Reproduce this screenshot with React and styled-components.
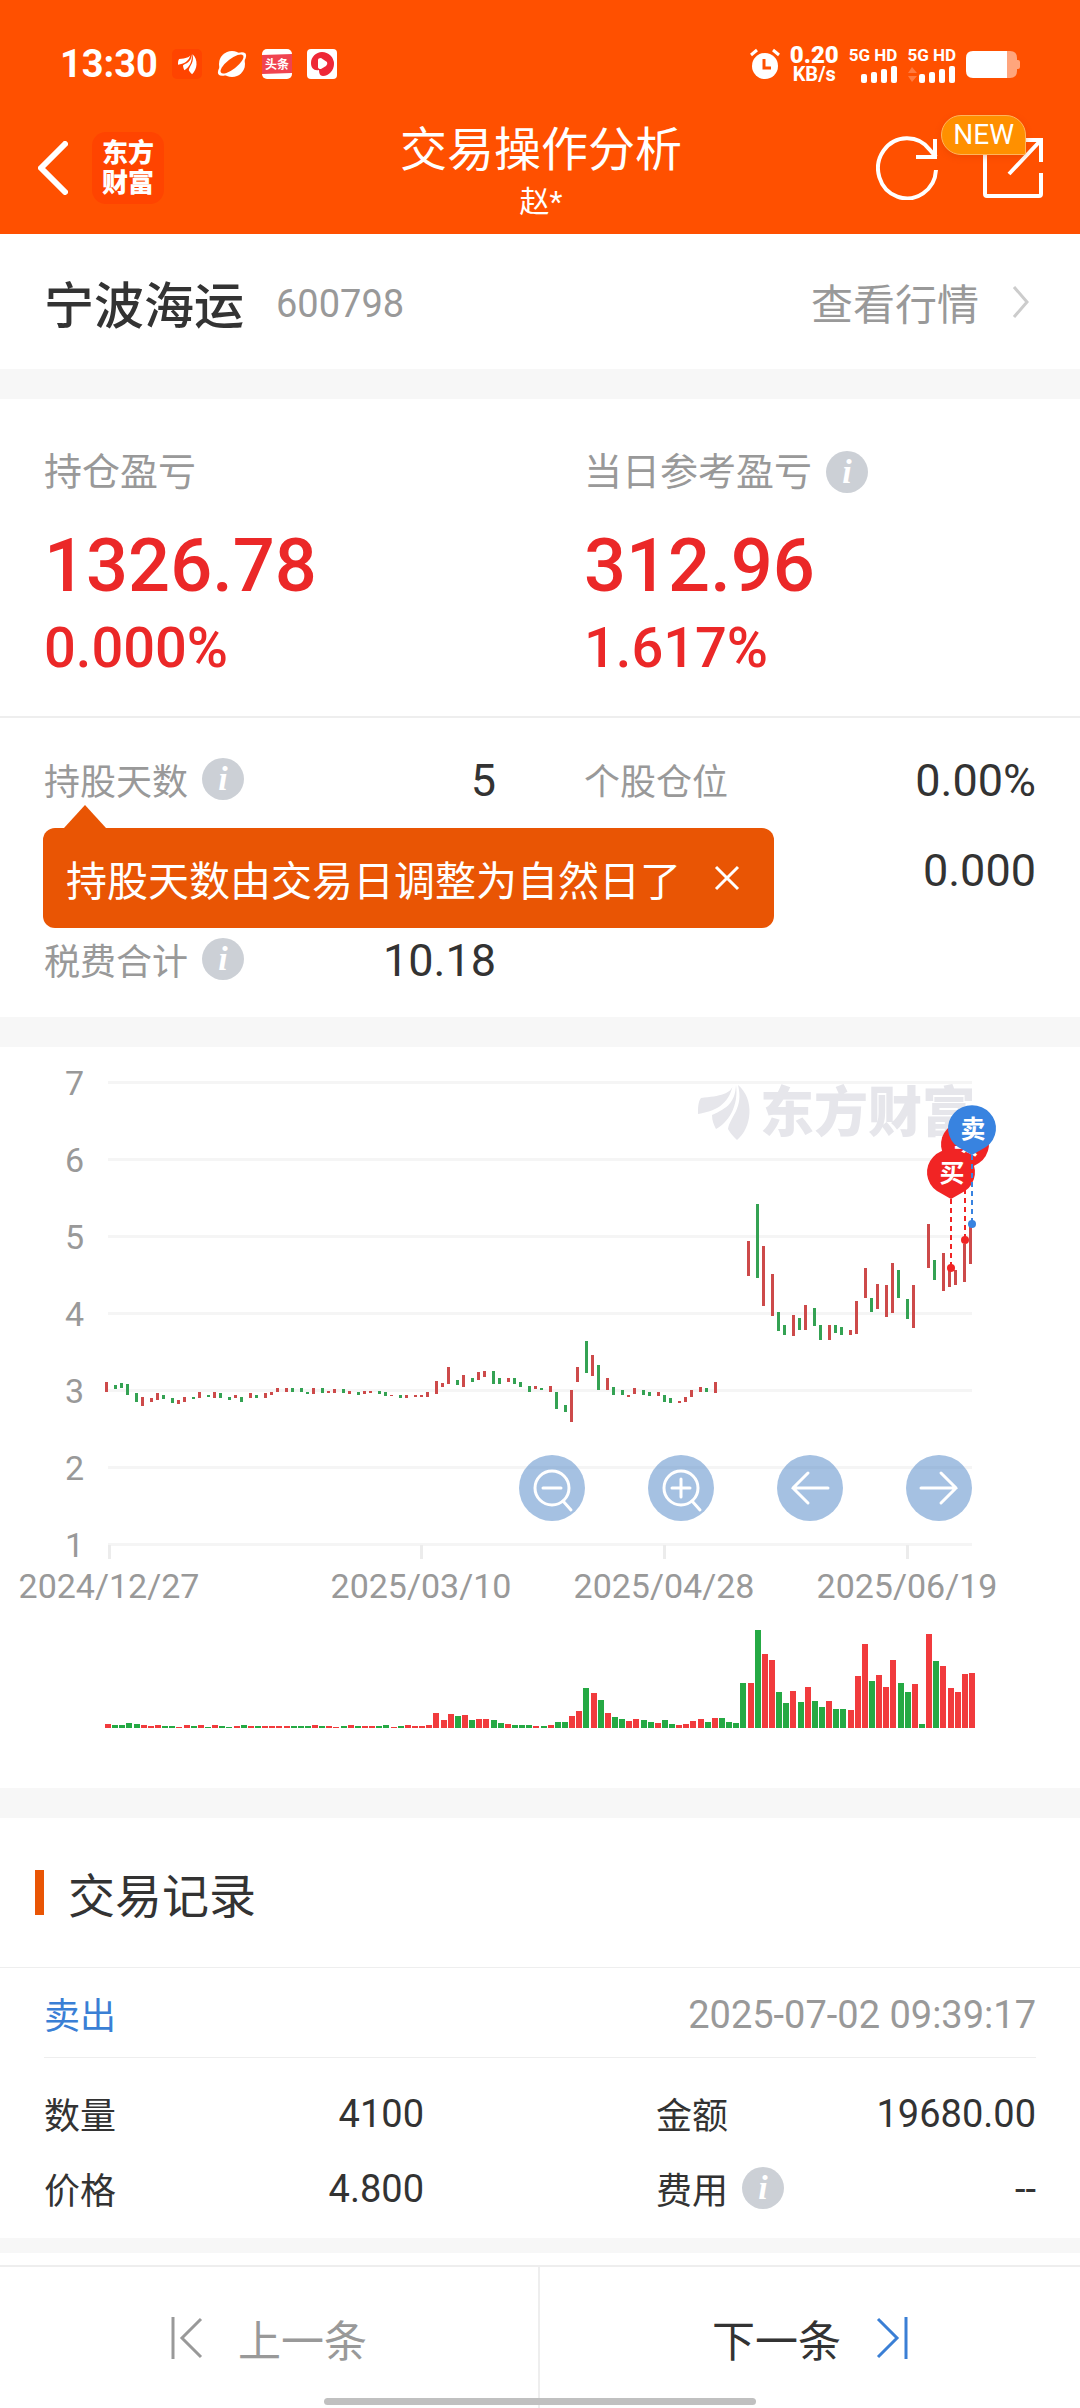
import { useState } from 'react'
import styled, { createGlobalStyle } from 'styled-components'

const days = [
    [1, 3.10, 2.98, 4], [0, 3.07, 3.01, 3], [0, 3.09, 3.03, 3], [0, 3.08, 2.93, 5],
    [0, 2.96, 2.85, 4], [1, 2.91, 2.79, 3], [1, 2.90, 2.85, 2], [1, 2.96, 2.87, 3],
    [0, 2.93, 2.88, 2], [0, 2.89, 2.83, 2], [1, 2.87, 2.82, 1], [1, 2.91, 2.85, 3],
    [0, 2.91, 2.88, 2], [1, 2.97, 2.90, 3], [0, 2.94, 2.91, 1], [1, 2.97, 2.90, 3],
    [0, 2.96, 2.89, 2], [0, 2.91, 2.87, 1], [1, 2.94, 2.89, 2], [0, 2.91, 2.85, 3],
    [1, 2.96, 2.90, 2], [0, 2.93, 2.90, 2], [1, 2.96, 2.90, 2], [1, 2.98, 2.94, 2],
    [1, 3.02, 2.98, 2], [1, 3.02, 2.98, 2], [0, 3.02, 2.97, 2], [0, 3.02, 2.97, 2],
    [0, 2.98, 2.95, 2], [1, 3.02, 2.95, 3], [0, 3.03, 2.96, 2], [1, 2.99, 2.96, 2],
    [1, 3.01, 2.96, 1], [0, 3.01, 2.96, 2], [1, 2.99, 2.95, 3], [0, 2.98, 2.93, 2],
    [1, 2.99, 2.95, 2], [1, 2.99, 2.96, 2], [0, 2.99, 2.95, 2], [0, 2.98, 2.92, 3],
    [1, 2.94, 2.92, 1], [0, 2.94, 2.89, 2], [1, 2.93, 2.90, 3], [1, 2.94, 2.91, 2],
    [1, 2.94, 2.91, 2], [1, 2.97, 2.91, 3], [1, 3.12, 2.95, 15], [1, 3.09, 3.04, 8],
    [1, 3.30, 3.08, 14], [0, 3.13, 3.06, 12], [1, 3.19, 3.04, 13], [0, 3.16, 3.11, 8],
    [1, 3.23, 3.13, 9], [1, 3.25, 3.17, 9], [0, 3.25, 3.08, 8], [0, 3.16, 3.08, 5],
    [1, 3.16, 3.10, 4], [0, 3.15, 3.08, 3], [0, 3.10, 3.04, 3], [0, 3.05, 2.98, 3],
    [1, 3.05, 3.01, 2], [0, 3.03, 3.00, 2], [1, 3.05, 2.97, 3], [0, 2.98, 2.75, 6],
    [0, 2.81, 2.71, 6], [1, 3.00, 2.59, 12], [1, 3.30, 3.10, 17], [0, 3.63, 3.22, 40],
    [1, 3.46, 3.18, 35], [0, 3.32, 3.00, 28], [1, 3.15, 3.00, 15], [0, 3.04, 2.93, 11],
    [0, 3.00, 2.93, 9], [1, 2.94, 2.91, 7], [1, 3.02, 2.95, 9], [0, 3.00, 2.94, 8],
    [0, 2.98, 2.92, 6], [1, 2.98, 2.92, 5], [0, 2.94, 2.84, 8], [0, 2.89, 2.83, 4],
    [1, 2.86, 2.83, 3], [1, 2.91, 2.84, 4], [1, 3.00, 2.91, 7], [1, 3.04, 2.97, 9],
    [0, 3.03, 2.97, 6], [1, 3.11, 2.96, 10], [0, null, null, 10], [0, null, null, 6],
    [0, null, null, 5], [0, null, null, 45], [1, 4.93, 4.48, 45], [0, 5.42, 4.45, 98],
    [1, 4.87, 4.09, 74], [1, 4.51, 3.96, 68], [0, 4.01, 3.77, 36], [0, 3.84, 3.72, 25],
    [1, 3.97, 3.70, 37], [0, 3.93, 3.78, 26], [1, 4.10, 3.78, 41], [0, 4.06, 3.83, 27],
    [0, 3.84, 3.65, 21], [1, 3.85, 3.65, 27], [0, 3.84, 3.74, 19], [0, 3.82, 3.72, 19],
    [1, 3.78, 3.71, 18], [1, 4.16, 3.73, 52], [1, 4.58, 4.19, 84], [0, 4.19, 4.01, 47],
    [1, 4.38, 4.05, 53], [1, 4.36, 3.95, 41], [1, 4.65, 4.00, 68], [0, 4.56, 4.20, 45],
    [0, 4.18, 3.92, 36], [1, 4.36, 3.81, 44], [0, null, null, 4], [1, 5.16, 4.58, 94],
    [0, 4.69, 4.43, 67], [1, 4.78, 4.28, 62], [1, 4.54, 4.34, 40], [1, 4.56, 4.37, 36],
    [1, 4.90, 4.40, 54], [1, 5.12, 4.64, 55],
]

const dateTicks = [
    { x: 109, label: '2024/12/27' },
    { x: 421, label: '2025/03/10' },
    { x: 664, label: '2025/04/28' },
    { x: 907, label: '2025/06/19' },
]

const trades = [
    { x: 965, y: 98, dot: 193, type: '买' },
    { x: 951, y: 126, dot: 221, type: '买' },
    { x: 972, y: 82, dot: 177, type: '卖' },
]

const priceY = (price) => 35 + (7 - price) * 77
const candleX = (i) => 105 + 3 * Math.ceil(i * 2.38 - 0.25)

const Feather = () => (
    <>
        <path d='M35 0 C34 10 22 12 3 14 C0 18 0 24 0 30 C16 27 31 22 35 0Z' />
        <path d='M38 1 C37 18 30 24 14 31 C14 37 16 41 18 45 C30 39 41 22 38 1Z' />
        <path d='M40 1 C57 15 54 44 39 56 C35 52 32 49 30 45 C32 33 46 24 40 1Z' />
    </>
)

const StatusBar = () => (
    <Status>
        <Clock>13:30</Clock>
        <StatusIcons>
            <svg width='30' height='30' viewBox='0 0 30 30'>
                <rect width='30' height='30' rx='5' fill='#ff4400' />
                <g fill='#fff' transform='translate(6 5) scale(.36)'><Feather /></g>
            </svg>
            <svg width='30' height='30' viewBox='0 0 30 30'>
                <circle cx='15' cy='15' r='13' fill='#fff' />
                <ellipse cx='15' cy='15' rx='17' ry='7' fill='#fff' transform='rotate(-38 15 15)' />
                <ellipse cx='15' cy='15' rx='14' ry='5' fill='#ff5000' transform='rotate(-38 15 15)' />
            </svg>
            <svg width='30' height='30' viewBox='0 0 30 30'>
                <rect width='30' height='30' rx='5' fill='#fff' />
                <path d='M0 6 L30 5 V24 L0 25Z' fill='#f04350' />
                <text x='15' y='20' fontSize='12' fontWeight='700' textAnchor='middle' fill='#fff'>头条</text>
            </svg>
            <svg width='30' height='30' viewBox='0 0 30 30'>
                <rect width='30' height='30' rx='4' fill='#fff' />
                <path d='M15 3 A12 12 0 0 1 27 15 C27 21 22 27 16 27 C13 27 12 24 12 21 C7 22 4 19 4 14 C4 8 9 3 15 3Z' fill='#ee2737' />
                <path d='M11 11 Q11 9 14 9 L20 13 Q21 15 19 17 L14 20 Q11 20 11 18Z' fill='#fff' />
            </svg>
        </StatusIcons>
        <StatusRight>
            <svg width='30' height='32' viewBox='0 0 30 32'>
                <circle cx='15' cy='18' r='13' fill='#fff' />
                <path d='M1 7 L7 2 M23 2 L29 7' stroke='#fff' strokeWidth='3' />
                <path d='M14 11 V20 H21' fill='none' stroke='#ff5000' strokeWidth='3' />
            </svg>
            <Speed>
                <strong>0.20</strong>
                <span>KB/s</span>
            </Speed>
            <Signal>
                <span>5G HD</span>
                <svg width='48' height='17' viewBox='0 0 48 17' fill='#fff'>
                    <rect x='12' y='8' width='6' height='9' rx='2' />
                    <rect x='22' y='6' width='6' height='11' rx='2' />
                    <rect x='32' y='3' width='6' height='14' rx='2' />
                    <rect x='42' y='0' width='6' height='17' rx='2' />
                </svg>
            </Signal>
            <Signal>
                <span>5G HD</span>
                <svg width='48' height='17' viewBox='0 0 48 17' fill='#fff'>
                    <path d='M1 7 L5 1 L10 7Z M1 10 L5 16 L10 10Z' opacity='.25' />
                    <rect x='12' y='8' width='6' height='9' rx='2' />
                    <rect x='22' y='6' width='6' height='11' rx='2' />
                    <rect x='32' y='3' width='6' height='14' rx='2' />
                    <rect x='42' y='0' width='6' height='17' rx='2' />
                </svg>
            </Signal>
            <svg width='54' height='27' viewBox='0 0 54 27'>
                <path d='M40 0 H44 Q51 0 51 7 V9 H52 Q54 9 54 11 V16 Q54 18 52 18 H51 V20 Q51 27 44 27 H40Z' fill='#ffa57c' />
                <path d='M7 0 H41 V27 H7 Q0 27 0 20 V7 Q0 0 7 0Z' fill='#fff' />
            </svg>
        </StatusRight>
    </Status>
)

const Info = ({ label }) => <InfoButton type='button' aria-label={label}>i</InfoButton>

const Pin = ({ x, y, dot, type }) => {
    const color = type === '卖' ? '#3883e0' : '#f12424'
    return (
        <g>
            <line x1={x} y1={y + 26} x2={x} y2={dot} stroke={color} strokeWidth='2' strokeDasharray='5 4' />
            <circle cx={x} cy={dot} r='4' fill={color} />
            <path
                d={`M${x} ${y + 26} L${x - 14} ${y + 18} A24 23 0 1 1 ${x + 14} ${y + 18}Z`}
                fill={color}
            />
            <text x={x + 1} y={y + 9} fontSize='25' fontWeight='700' textAnchor='middle' fill='#fff'>{type}</text>
        </g>
    )
}

const KLineChart = () => (
    <ChartSection>
        <Chart viewBox='0 0 1080 741' role='img' aria-label='K线'>
            <clipPath id='plot'>
                <rect x='100' y='0' width='872' height='600' />
            </clipPath>
            {[7, 6, 5, 4, 3, 2, 1].map((price) => (
                <g key={price}>
                    <rect x='108' y={priceY(price) - 1} width='864' height='3' fill='#f5f5f5' />
                    <text x='84' y={priceY(price) + 13} fontSize='34' textAnchor='end' fill='#999'>{price}</text>
                </g>
            ))}
            {dateTicks.map(({ x, label }) => (
                <g key={label}>
                    <rect x={x - 1} y='498' width='3' height='14' fill='#ececec' />
                    <text x={x} y='551' fontSize='34' textAnchor='middle' fill='#999'>{label}</text>
                </g>
            ))}
            <g clipPath='url(#plot)' fill='#e6e6eb'>
                <g transform='translate(698 37)'><Feather /></g>
                <text x='760' y='85' fontSize='54' fontWeight='900'>东方财富</text>
            </g>
            <g shapeRendering='crispEdges'>
                {days.map(([rising, high, low, volume], i) => (
                    <g key={i}>
                        {high && (
                            <rect
                                x={candleX(i)}
                                y={Math.round(priceY(high))}
                                width='3'
                                height={Math.round(priceY(low)) - Math.round(priceY(high))}
                                fill={rising ? '#cd4a4a' : '#34a253'}
                            />
                        )}
                        <rect
                            x={Math.round(105 + i * 7.14)}
                            y={681 - volume}
                            width='6'
                            height={volume}
                            fill={rising ? '#f13b3d' : '#25a944'}
                        />
                    </g>
                ))}
            </g>
            {trades.map((trade) => <Pin key={trade.x} {...trade} />)}
        </Chart>
        <ChartTools>
            <ToolButton type='button' aria-label='缩小'>
                <svg viewBox='0 0 66 66'>
                    <circle cx='33' cy='33' r='17' />
                    <path d='M24 33 H42 M44 46 L52 55' />
                </svg>
            </ToolButton>
            <ToolButton type='button' aria-label='放大'>
                <svg viewBox='0 0 66 66'>
                    <circle cx='33' cy='33' r='17' />
                    <path d='M24 33 H42 M33 24 V42 M44 46 L52 55' />
                </svg>
            </ToolButton>
            <ToolButton type='button' aria-label='左移'>
                <svg viewBox='0 0 66 66'>
                    <path d='M51 33 H16 M31 18 L16 33 L31 48' />
                </svg>
            </ToolButton>
            <ToolButton type='button' aria-label='右移'>
                <svg viewBox='0 0 66 66'>
                    <path d='M15 33 H50 M35 18 L50 33 L35 48' />
                </svg>
            </ToolButton>
        </ChartTools>
    </ChartSection>
)

const App = () => {
    const [tipOpen, setTipOpen] = useState(true)

    return (
        <Page>
            <GlobalStyle />
            <Header>
                <StatusBar />
                <NavBar>
                    <NavSide>
                        <IconButton type='button' aria-label='返回'>
                            <svg width='30' height='54' viewBox='0 0 30 54'>
                                <path d='M27 3 L3 27 L27 51' fill='none' stroke='#fff' strokeWidth='6' strokeLinecap='round' strokeLinejoin='round' />
                            </svg>
                        </IconButton>
                        <Brand>
                            <span>东方</span>
                            <span>财富</span>
                        </Brand>
                    </NavSide>
                    <NavTitle>
                        <h1>交易操作分析</h1>
                        <p>赵*</p>
                    </NavTitle>
                    <NavSide $end>
                        <IconButton type='button' aria-label='刷新'>
                            <svg width='64' height='64' viewBox='0 0 64 64' fill='none' stroke='#fff' strokeWidth='4'>
                                <path d='M60 34 A29 30 0 1 1 54 14 L60 21' />
                                <path d='M59 3 V21 H40' />
                            </svg>
                        </IconButton>
                        <IconButton type='button' aria-label='分享'>
                            <svg width='62' height='62' viewBox='0 0 62 62' fill='none' stroke='#fff' strokeWidth='4'>
                                <path d='M40 3 H59 V25 M59 3 L27 37' />
                                <path d='M59 36 V57 Q59 59 57 59 H5 Q3 59 3 57 V14' />
                            </svg>
                            <NewBadge>NEW</NewBadge>
                        </IconButton>
                    </NavSide>
                </NavBar>
            </Header>

            <StockBar>
                <h2>宁波海运</h2>
                <StockCode>600798</StockCode>
                <QuoteLink href='#quote'>
                    查看行情
                    <svg width='18' height='34' viewBox='0 0 18 34'>
                        <path d='M2 2 L15 17 L2 32' fill='none' stroke='#ccc' strokeWidth='3' />
                    </svg>
                </QuoteLink>
            </StockBar>

            <Profit>
                <div>
                    <ProfitLabel>持仓盈亏</ProfitLabel>
                    <ProfitValue>1326.78</ProfitValue>
                    <ProfitRate>0.000%</ProfitRate>
                </div>
                <div>
                    <ProfitLabel>当日参考盈亏 <Info label='当日参考盈亏说明' /></ProfitLabel>
                    <ProfitValue>312.96</ProfitValue>
                    <ProfitRate>1.617%</ProfitRate>
                </div>
            </Profit>
            <Details>
                <Detail>
                    <dt>持股天数 <Info label='持股天数说明' /></dt>
                    <dd>5</dd>
                </Detail>
                <Detail>
                    <dt>个股仓位</dt>
                    <dd>0.00%</dd>
                </Detail>
                <Detail />
                <Detail>
                    <dt />
                    <dd>0.000</dd>
                </Detail>
                <Detail>
                    <dt>税费合计 <Info label='税费合计说明' /></dt>
                    <dd>10.18</dd>
                </Detail>
                {tipOpen && (
                    <Tip>
                        持股天数由交易日调整为自然日了
                        <IconButton type='button' aria-label='关闭' onClick={() => setTipOpen(false)}>
                            <svg width='26' height='26' viewBox='0 0 26 26'>
                                <path d='M2 2 L24 24 M24 2 L2 24' stroke='#fff' strokeWidth='3' />
                            </svg>
                        </IconButton>
                    </Tip>
                )}
            </Details>

            <KLineChart />

            <Records>
                <RecordsTitle>交易记录</RecordsTitle>
                <RecordHead>
                    <strong>卖出</strong>
                    <time>2025-07-02 09:39:17</time>
                </RecordHead>
                <RecordFields>
                    <Field>
                        <dt>数量</dt>
                        <dd>4100</dd>
                    </Field>
                    <Field>
                        <dt>金额</dt>
                        <dd>19680.00</dd>
                    </Field>
                    <Field>
                        <dt>价格</dt>
                        <dd>4.800</dd>
                    </Field>
                    <Field>
                        <dt>费用 <Info label='费用说明' /></dt>
                        <dd>--</dd>
                    </Field>
                </RecordFields>
            </Records>

            <Pager>
                <PagerButton type='button' $muted>
                    <svg width='32' height='44' viewBox='0 0 32 44'>
                        <path d='M2 1 V43 M30 3 L11 22 L30 41' />
                    </svg>
                    上一条
                </PagerButton>
                <PagerButton type='button'>
                    下一条
                    <svg width='32' height='44' viewBox='0 0 32 44'>
                        <path d='M30 1 V43 M2 3 L21 22 L2 41' />
                    </svg>
                </PagerButton>
                <HomeIndicator />
            </Pager>
        </Page>
    )
}

const GlobalStyle = createGlobalStyle`
    * {
        box-sizing: border-box;
        margin: 0;
        padding: 0;
    }
    body {
        background: #fff;
        color: #333;
        font-family: Roboto, "Noto Sans CJK SC", sans-serif;
    }
    button {
        border: 0;
        background: none;
        font: inherit;
        color: inherit;
    }
    svg {
        display: block;
        flex-shrink: 0;
    }
`;

const Page = styled.div`
    display: flex;
    flex-direction: column;
    min-height: 100vh;
`;

const Header = styled.header`
    background: #ff5000;
    color: #fff;
    padding-top: 26px;
`;

const Status = styled.div`
    display: flex;
    align-items: center;
    height: 76px;
    padding: 0 60px;
`;

const Clock = styled.time`
    font-size: 38px;
    font-weight: 700;
    margin-right: 14px;
`;

const StatusIcons = styled.div`
    display: flex;
    gap: 15px;
`;

const StatusRight = styled.div`
    display: flex;
    align-items: center;
    gap: 10px;
    margin-left: auto;
`;

const Speed = styled.div`
    display: flex;
    flex-direction: column;
    align-items: center;
    font-size: 20px;
    line-height: 18px;
    font-weight: 700;
    strong {
        font-size: 24px;
        line-height: 20px;
    }
`;

const Signal = styled.div`
    display: flex;
    flex-direction: column;
    gap: 2px;
    font-size: 17px;
    line-height: 18px;
    font-weight: 700;
`;

const NavBar = styled.nav`
    display: grid;
    grid-template-columns: 1fr auto 1fr;
    align-items: center;
    height: 132px;
    padding: 0 36px 0 38px;
`;

const NavSide = styled.div`
    display: flex;
    align-items: center;
    gap: ${({ $end }) => ($end ? '42px' : '24px')};
    justify-content: ${({ $end }) => ($end ? 'flex-end' : 'flex-start')};
`;

const IconButton = styled.button`
    position: relative;
`;

const Brand = styled.div`
    display: flex;
    flex-direction: column;
    align-items: center;
    justify-content: center;
    width: 72px;
    height: 72px;
    border-radius: 14px;
    background: #ff4400;
    font-size: 26px;
    font-weight: 900;
    line-height: 30px;
`;

const NavTitle = styled.div`
    padding-top: 8px;
    text-align: center;
    h1 {
        font-size: 47px;
        font-weight: 400;
        line-height: 60px;
    }
    p {
        font-size: 30px;
        line-height: 44px;
    }
`;

const NewBadge = styled.span`
    position: absolute;
    right: 18px;
    bottom: 44px;
    padding: 0 11px;
    border: 1px solid #ffb45c;
    border-radius: 20px 20px 2px 20px;
    background: #ff9000;
    box-shadow: 0 2px 6px rgba(200, 60, 0, .3);
    font-size: 28px;
    line-height: 38px;
`;

const StockBar = styled.section`
    display: flex;
    align-items: center;
    height: 135px;
    padding: 0 50px 0 44px;
    h2 {
        font-size: 50px;
        font-weight: 500;
    }
`;

const StockCode = styled.span`
    margin-left: 32px;
    padding-top: 4px;
    font-size: 38px;
    color: #999;
`;

const QuoteLink = styled.a`
    display: flex;
    align-items: center;
    gap: 33px;
    margin-left: auto;
    font-size: 42px;
    color: #999;
    text-decoration: none;
`;

const Profit = styled.section`
    display: grid;
    grid-template-columns: 1fr 1fr;
    gap: 88px;
    padding: 43px 44px 38px;
    border-top: 30px solid #f7f7f7;
    border-bottom: 2px solid #eee;
    color: #eb2828;
`;

const ProfitLabel = styled.h3`
    display: flex;
    align-items: center;
    gap: 14px;
    font-size: 38px;
    font-weight: 400;
    line-height: 60px;
    color: #999;
`;

const ProfitValue = styled.p`
    margin: 24px 0 12px;
    font-size: 74px;
    font-weight: 500;
    line-height: 80px;
`;

const ProfitRate = styled.p`
    font-size: 56px;
    line-height: 60px;
    font-weight: 500;
`;

const InfoButton = styled.button`
    width: 42px;
    height: 42px;
    border-radius: 50%;
    background: #ccd0d6;
    color: #fff;
    font: italic 700 34px/42px "Liberation Serif", serif;
    text-align: center;
`;

const Details = styled.dl`
    position: relative;
    display: grid;
    grid-template-columns: 1fr 1fr;
    grid-auto-rows: 90px;
    column-gap: 88px;
    padding: 16px 44px 13px;
`;

const Detail = styled.div`
    display: flex;
    align-items: center;
    justify-content: space-between;
    dt {
        display: flex;
        align-items: center;
        gap: 14px;
        font-size: 36px;
        color: #999;
    }
    dd {
        padding-top: 2px;
        font-size: 45px;
    }
`;

const Tip = styled.div`
    position: absolute;
    top: 110px;
    left: 43px;
    display: flex;
    align-items: center;
    gap: 33px;
    height: 100px;
    padding: 0 34px 0 23px;
    border-radius: 12px;
    background: #e95504;
    color: #fff;
    font-size: 41px;
    white-space: nowrap;
    &::before {
        content: '';
        position: absolute;
        left: 21px;
        bottom: 100%;
        border: solid transparent;
        border-width: 0 21px 23px;
        border-bottom-color: #e95504;
    }
`;

const ChartSection = styled.section`
    position: relative;
    border-top: 30px solid #f7f7f7;
    border-bottom: 30px solid #f7f7f7;
`;

const Chart = styled.svg`
    width: 100%;
    height: auto;
`;

const ChartTools = styled.div`
    position: absolute;
    right: 10%;
    bottom: 36%;
    display: flex;
    gap: 63px;
`;

const ToolButton = styled.button`
    width: 66px;
    height: 66px;
    border-radius: 50%;
    background: rgba(75, 131, 197, .5);
    svg {
        width: 100%;
        fill: none;
        stroke: #fff;
        stroke-width: 3;
        stroke-linecap: round;
    }
`;

const Records = styled.section`
    border-bottom: 15px solid #f7f7f7;
`;

const RecordsTitle = styled.h2`
    display: flex;
    align-items: center;
    gap: 24px;
    height: 150px;
    padding-left: 35px;
    border-bottom: 1px solid #eee;
    font-size: 47px;
    font-weight: 400;
    &::before {
        content: '';
        width: 9px;
        height: 45px;
        background: #e95504;
    }
`;

const RecordHead = styled.div`
    display: flex;
    align-items: center;
    justify-content: space-between;
    height: 90px;
    margin: 0 44px;
    border-bottom: 1px solid #eee;
    strong {
        font-size: 36px;
        font-weight: 400;
        color: #3a7fd5;
    }
    time {
        padding-top: 4px;
        font-size: 38px;
        color: #999;
    }
`;

const RecordFields = styled.dl`
    display: grid;
    grid-template-columns: 1fr 1fr;
    grid-auto-rows: 75px;
    column-gap: 232px;
    padding: 17px 44px 13px;
`;

const Field = styled(Detail)`
    dt {
        color: #333;
    }
    dd {
        font-size: 38px;
    }
`;

const Pager = styled.footer`
    position: relative;
    display: grid;
    grid-template-columns: 1fr 1fr;
    height: 143px;
    margin-top: auto;
    border-top: 2px solid #eee;
`;

const PagerButton = styled.button`
    display: flex;
    align-items: center;
    justify-content: center;
    gap: 35px;
    font-size: 43px;
    color: ${({ $muted }) => ($muted ? '#999' : '#333')};
    border-right: ${({ $muted }) => ($muted ? '2px solid #eee' : '0')};
    svg {
        fill: none;
        stroke: ${({ $muted }) => ($muted ? '#999' : '#3a7fd5')};
        stroke-width: 3;
    }
`;

const HomeIndicator = styled.div`
    position: absolute;
    left: 30%;
    right: 30%;
    bottom: 3px;
    height: 7px;
    border-radius: 4px;
    background: #c0c0c0;
`;

export default App;
